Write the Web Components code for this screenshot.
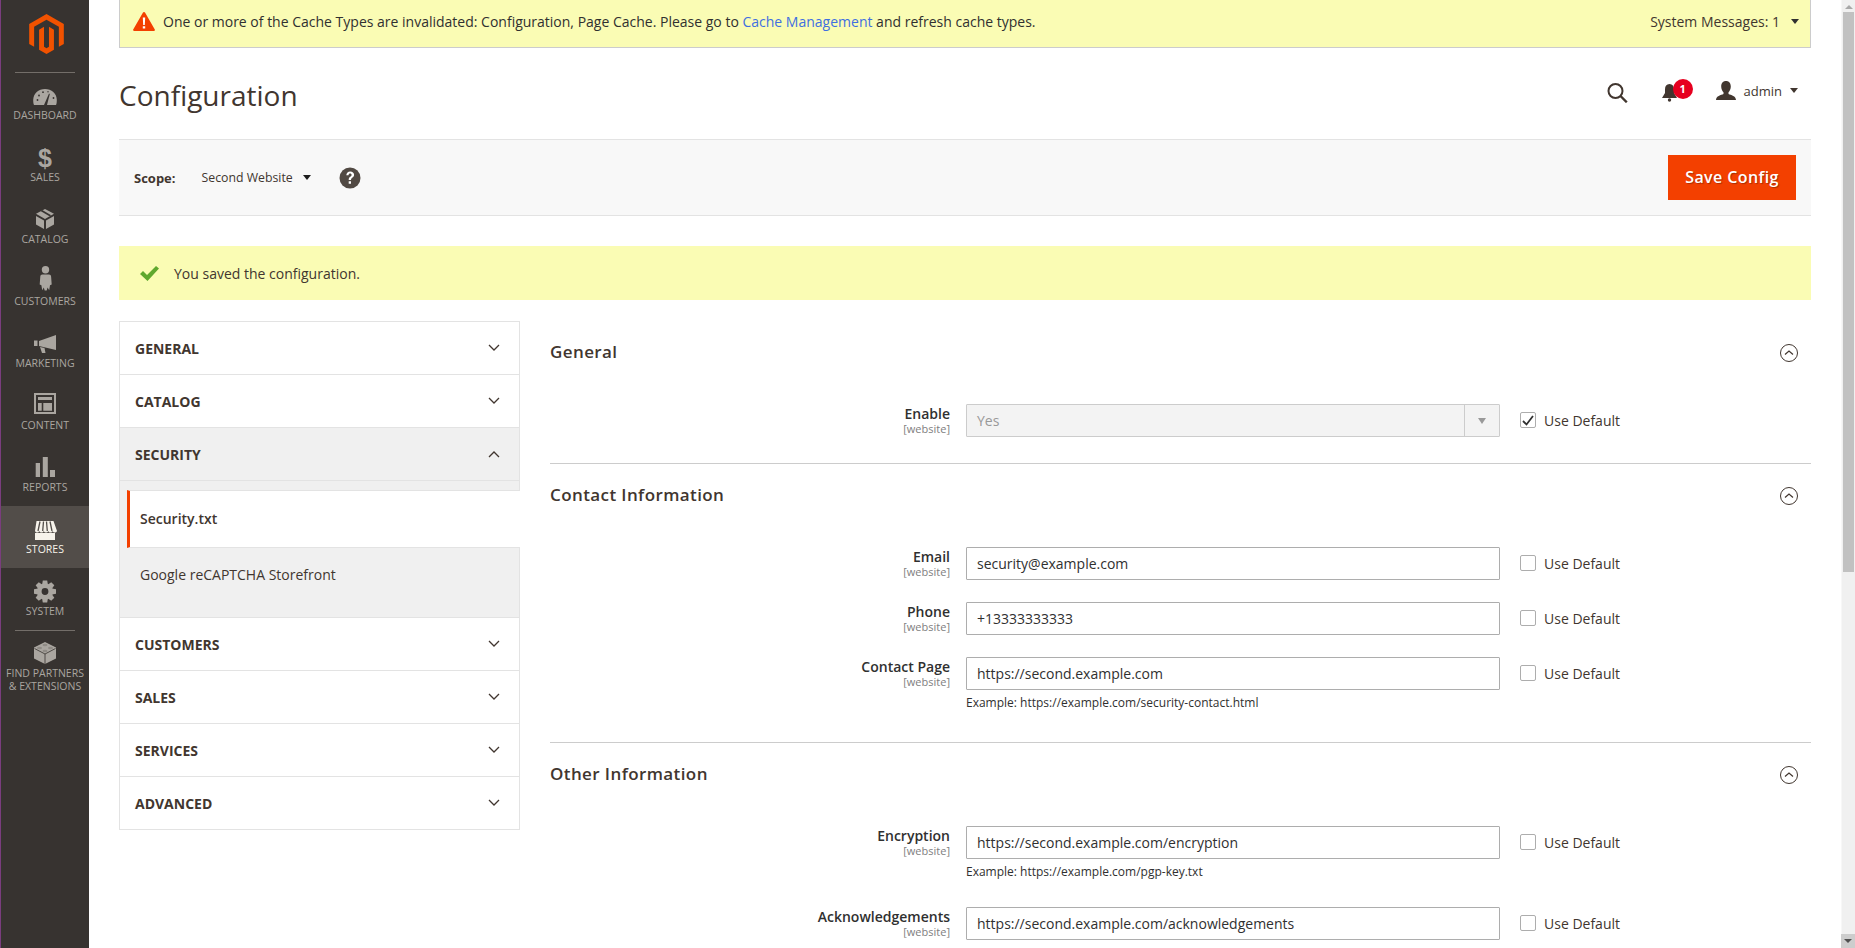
<!DOCTYPE html>
<html>
<head>
<meta charset="utf-8">
<title>Configuration</title>
<style>
html,body{margin:0;padding:0;height:948px;overflow:hidden;background:#fff}
body{display:flex;font-family:"Open Sans",sans-serif;font-size:14px;color:#303030}
main{flex:1;min-width:0;height:948px;overflow:hidden;padding:0 30px;box-sizing:border-box}
.columns{display:flex;gap:30px;margin-top:21px;align-items:flex-start}
</style>
</head>
<body>
<admin-menu>
  <menu-item label="Dashboard" icon="dashboard"></menu-item>
  <menu-item label="Sales" icon="sales"></menu-item>
  <menu-item label="Catalog" icon="catalog"></menu-item>
  <menu-item label="Customers" icon="customers"></menu-item>
  <menu-item label="Marketing" icon="marketing"></menu-item>
  <menu-item label="Content" icon="content"></menu-item>
  <menu-item label="Reports" icon="reports"></menu-item>
  <menu-item label="Stores" icon="stores" active></menu-item>
  <menu-item label="System" icon="system"></menu-item>
  <menu-item label="Find Partners &amp; Extensions" icon="partners" divided></menu-item>
</admin-menu>
<main>
  <system-notice>One or more of the Cache Types are invalidated: Configuration, Page Cache. Please go to <a>Cache Management</a> and refresh cache types.</system-notice>
  <page-head>Configuration</page-head>
  <scope-bar></scope-bar>
  <success-message>You saved the configuration.</success-message>
  <div class="columns">
    <config-tabs>
      <tab-row>General</tab-row>
      <tab-row>Catalog</tab-row>
      <tab-row open>Security</tab-row>
      <sub-tabs>
        <sub-tab current>Security.txt</sub-tab>
        <sub-tab>Google reCAPTCHA Storefront</sub-tab>
      </sub-tabs>
      <tab-row>Customers</tab-row>
      <tab-row>Sales</tab-row>
      <tab-row>Services</tab-row>
      <tab-row>Advanced</tab-row>
    </config-tabs>
    <config-form>
      <config-section heading="General">
        <config-row label="Enable" disabled checked>Yes</config-row>
      </config-section>
      <config-section heading="Contact Information">
        <config-row label="Email">security@example.com</config-row>
        <config-row label="Phone">+13333333333</config-row>
        <config-row label="Contact Page" note="Example: https://example.com/security-contact.html">https://second.example.com</config-row>
      </config-section>
      <config-section heading="Other Information">
        <config-row label="Encryption" note="Example: https://example.com/pgp-key.txt">https://second.example.com/encryption</config-row>
        <config-row label="Acknowledgements">https://second.example.com/acknowledgements</config-row>
      </config-section>
    </config-form>
  </div>
</main>
<page-scrollbar></page-scrollbar>

<script>
const shift = s => `<g transform="translate(0,-1)">${s}</g>`
const menuIcons = {
  dashboard: `<path d="M4 24c-.6-1-.8-2.700-.8-5C3.200 12.500 8.500 8 15 8s11.800 4.500 11.800 11c0 2.300-.2 4-.8 5z"/>
    <g fill="#373330"><path d="M14 24l5-11.500 .8 .4L17 24z"/><circle cx="7.500" cy="19" r=".9"/><circle cx="9" cy="14.500" r=".9"/><circle cx="13" cy="11.200" r=".9"/><circle cx="18" cy="10.800" r=".7"/><circle cx="23.500" cy="17" r=".9"/></g>`,
  sales: `<text x="15" y="24" text-anchor="middle" font-family="Liberation Sans" font-weight="700" font-size="25">$</text>`,
  catalog: `<path d="M15 4l9 4.800-9 5.200-9-5.200z"/><path d="M10.500 6l9 5.200 1.700-1-9-5.200z" fill="#373330"/><path d="M6 11l8 4.500V24l-8-4.500zM24 11l-8 4.500V24l8-4.500z"/>`,
  customers: `<circle cx="15.500" cy="2.800" r="3.700"/><path d="M12 7.500h7c1.300 0 2 .7 2.100 2l.6 8-1.700 .8-.8 5-1.600-2.800-.9 3h-2l-.9-3-1.600 2.800-.8-5-1.700-.8 .6-8c.1-1.300 .8-2 2.100-2z"/>`,
  marketing: `<path d="M9 12L26 6v15L9 17zM4 11.500h3.500V17H4zM10 18l4.500 1 1 5H12z"/>`,
  content: `<path fill-rule="evenodd" d="M4 2h22v21H4zM6 4v17h18V4z"/><path d="M8 6h14v3H8zM8 12h3.700v7.700H8zM13.300 12H22v7.700h-8.700z"/>`,
  reports: `<path d="M5.700 10H10v14H5.700zM12.800 4h5v20h-5zM20 17h5v7h-5z"/>`,
  stores: shift(`<path d="M5 19h20v7H5z"/><path d="M6.500 7h17L27 17c-1 2-3.500 2-4.300 0-.8 2-3.700 2-4.500 0-.7 2-3.600 2-4.400 0-.8 2-3.700 2-4.500 0-.8 2-3.300 2-4.300 0z"/><path d="M10 7.500L8 17M13.500 7.500L12.700 17M16.500 7.500L17.300 17M20 7.500L22 17" stroke="#524d49" stroke-width="1.300" fill="none"/>`),
  system: shift(`<circle cx="15" cy="15.500" r="5.700" fill="none" stroke="currentColor" stroke-width="4.600"/>
    <g>${[0,45,90,135,180,225,270,315].map(a => `<path transform="rotate(${a} 15 15.500)" d="M12.800 4.500h4.400l.7 4h-5.800z"/>`).join("")}</g>`),
  partners: `<path d="M15 3l11 5.500v11L15 25 4 19.500v-11z"/>
    <path d="M4.500 9.500L15 15l10.500-5.500M15 15v10" fill="none" stroke="#373330" stroke-width=".8"/>
    <g fill="#8f8b85"><ellipse cx="15" cy="6" rx="2.500" ry="1.300"/><ellipse cx="9.500" cy="9" rx="2.500" ry="1.300"/><ellipse cx="20.500" cy="9" rx="2.500" ry="1.300"/><ellipse cx="15" cy="12" rx="2.500" ry="1.300"/></g>`
}

class AdminMenu extends HTMLElement{
    constructor(){
        super()
        this.attachShadow({mode:"open"})
        this.shadowRoot.innerHTML = `
        <style>
        :host{display:block;flex:none;width:89px;height:948px;box-sizing:border-box;background:#373330;border-left:1px solid #7a3d7e}
        .logo{display:flex;justify-content:center;height:72px;box-sizing:border-box;padding-top:14px}
        .logo svg{margin-left:2px}
        hr{border:0;height:1px;background:#736e69;margin:0 14px -1px 14px;position:relative}
        </style>
        <div class="logo">
          <svg width="35" height="40" viewBox="1.609 0 20.782 24" fill="#f15200">
            <path d="M12 24l-4.455-2.572v-12l2.970-1.715v12.001l1.485.902 1.485-.902V7.713l2.971 1.715v12L12 24zM22.391 6v12l-2.969 1.714V7.713L12 3.430 4.574 7.713v12L1.609 18V6L12 0l10.391 6z"/>
          </svg>
        </div>
        <hr>
        <slot></slot>`
    }
}

class MenuItem extends HTMLElement{
    constructor(){
        super()
        this.attachShadow({mode:"open"})
    }
    connectedCallback(){
        const icon = menuIcons[this.getAttribute("icon")]
        this.shadowRoot.innerHTML = `
        <style>
        :host{display:block;height:62px;box-sizing:border-box;padding-top:9px;color:#aaa6a0;text-align:center}
        :host([active]){background:#524d49;color:#f7f3eb}
        :host([divided]){height:auto;position:relative}
        :host([divided])::before{content:"";position:absolute;top:0;left:14px;right:14px;height:1px;background:#736e69}
        svg{display:block;margin:0 auto 0;width:30px;height:28px;overflow:visible;fill:currentColor}
        .name{font-size:10.500px;line-height:13px;text-transform:uppercase;white-space:nowrap}
        </style>
        <svg viewBox="0 0 30 28">${icon}</svg>
        <div class="name">${this.getAttribute("label").replace("&","<br>&amp;")}</div>`
    }
}

class SystemNotice extends HTMLElement{
    constructor(){
        super()
        this.attachShadow({mode:"open"})
        this.shadowRoot.innerHTML = `
        <style>
        :host{display:flex;align-items:center;height:48px;box-sizing:border-box;background:#fafcb4;border:1px solid #ccc;border-top:0;padding:0 11px 4px 13px;font-size:14px;color:#303030}
        svg{flex:none;margin-right:8px}
        .text{flex:1}
        ::slotted(a){color:#3f6fe0}
        .count{color:#41362f;display:flex;align-items:center;gap:11px}
        .caret{width:0;height:0;border:4px solid transparent;border-top:5px solid #303030;border-bottom:0}
        </style>
        <svg width="22" height="19" viewBox="0 0 22 19"><path d="M11 0c.5 0 .8 .2 1 .6l9.800 17c.3 .6 0 1.400-.8 1.400H1c-.8 0-1.100-.8-.8-1.400L10 .6c.2-.4 .5-.6 1-.6z" fill="#f34000"/><path d="M9.800 5.500h2.400l-.4 7.500h-1.600zM9.800 14.200h2.400v2.400H9.800z" fill="#fff"/></svg>
        <div class="text"><slot></slot></div>
        <div class="count">System Messages: 1 <span class="caret"></span></div>`
    }
}

class PageHead extends HTMLElement{
    constructor(){
        super()
        this.attachShadow({mode:"open"})
        this.shadowRoot.innerHTML = `
        <style>
        :host{display:flex;align-items:center;height:91px;color:#41362f}
        h1{flex:1;margin:0;font-size:28px;font-weight:400;line-height:36px;padding-top:3px}
        .actions{display:flex;align-items:flex-start;align-self:flex-start;margin-top:33px;padding-right:13px}
        .search{margin-top:2px}
        .bell{position:relative;margin:3px 0 0 34px;height:18px;width:15px}
        .badge{position:absolute;left:11px;top:-5px;width:20px;height:20px;border-radius:50%;background:#e6001f;color:#fff;font-size:11px;font-weight:700;line-height:20px;text-align:center}
        .user{margin-left:39px;display:flex;align-items:center;height:19px}
        .name{margin-left:8px;font-size:13px}
        .caret{margin-left:8px;width:0;height:0;border:4px solid transparent;border-top:5px solid #41362f;border-bottom:0}
        </style>
        <h1><slot></slot></h1>
        <div class="actions">
          <svg class="search" width="21" height="20" viewBox="0 0 21 20" fill="none" stroke="#41362f"><circle cx="8.500" cy="8" r="7" stroke-width="2"/><path d="M13.500 13L19.800 19.300" stroke-width="2.400"/></svg>
          <div class="bell">
            <svg width="15" height="18" viewBox="0 0 15 18" fill="#41362f"><path d="M7.500 0c3 0 4.500 2.200 4.500 5.200v3.800l3 5H0l3-5V5.200C3 2.200 4.500 0 7.500 0z"/><circle cx="7.500" cy="16" r="1.700"/></svg>
            <div class="badge">1</div>
          </div>
          <div class="user">
            <svg width="20" height="19" viewBox="0 0 20 19" fill="#41362f"><path d="M10 0c3 0 4.800 2.200 4.800 5.500 0 2.500-1 4.500-2.300 5.800v1.700c2.500 1 7.500 2 7.500 6H0c0-4 5-5 7.500-6v-1.700C6.200 10 5.200 8 5.200 5.500 5.200 2.200 7 0 10 0z"/></svg>
            <span class="name">admin</span><span class="caret"></span>
          </div>
        </div>`
    }
}

class ScopeBar extends HTMLElement{
    constructor(){
        super()
        this.attachShadow({mode:"open"})
        this.shadowRoot.innerHTML = `
        <style>
        :host{display:flex;align-items:center;height:77px;box-sizing:border-box;background:#f8f8f8;border-top:1px solid #e3e3e3;border-bottom:1px solid #e3e3e3;padding:0 15px;font-size:13px;color:#41362f}
        b{font-weight:700;margin-right:26px}
        .site{font-size:12.300px}
        .caret{margin-left:10px;width:0;height:0;border:4px solid transparent;border-top:5px solid #1d1d1d;border-bottom:0}
        .help{margin-left:28px}
        button{margin-left:auto;width:128px;height:45px;border:0;border-radius:0;background:#f34000;color:#fff;font:600 16px "Open Sans",sans-serif;letter-spacing:.4px;text-shadow:1px 1px 1px rgba(0,0,0,.3);padding:0 0 2px}
        </style>
        <b>Scope:</b><span class="site">Second Website</span><span class="caret"></span>
        <svg class="help" width="22" height="22" viewBox="0 0 22 22"><circle cx="11" cy="11" r="10.500" fill="#514943"/><path d="M7.300 8.300C7.500 5.800 9 4.500 11.200 4.500c2.300 0 3.900 1.400 3.900 3.300 0 2.800-3.100 2.900-3.100 5.200H9.700c0-3.400 2.900-3.400 2.900-5 0-.8-.6-1.400-1.500-1.400-.9 0-1.500 .6-1.600 1.700zM9.700 14.300H12v2.400H9.700z" fill="#fff"/></svg>
        <button>Save Config</button>`
    }
}

class SuccessMessage extends HTMLElement{
    constructor(){
        super()
        this.attachShadow({mode:"open"})
        this.shadowRoot.innerHTML = `
        <style>
        :host{display:flex;align-items:center;gap:15px;height:54px;margin-top:30px;box-sizing:border-box;background:#fafcb4;padding-left:21px;font-size:14px;color:#41362f}
        </style>
        <svg width="19" height="15" viewBox="0 0 19 15"><path d="M0 8l3-3 4 4 9-9 3 2.500L7.500 15z" fill="#5fa82e"/></svg>
        <span><slot></slot></span>`
    }
}

class ConfigTabs extends HTMLElement{
    constructor(){
        super()
        this.attachShadow({mode:"open"})
        this.shadowRoot.innerHTML = `
        <style>
        :host{display:block;flex:none;width:401px;box-sizing:border-box;border:1px solid #e3e3e3;border-bottom:0}
        </style>
        <slot></slot>`
    }
}

class TabRow extends HTMLElement{
    constructor(){
        super()
        this.attachShadow({mode:"open"})
    }
    connectedCallback(){
        const points = this.hasAttribute("open") ? "1,7 6,2 11,7" : "1,1 6,6 11,1"
        this.shadowRoot.innerHTML = `
        <style>
        :host{display:flex;align-items:center;justify-content:space-between;height:53px;box-sizing:border-box;border-bottom:1px solid #e3e3e3;padding:0 19px 0 15px;font-size:14px;font-weight:700;text-transform:uppercase;color:#41362f}
        :host([open]){background:#f0f0f0;font-weight:700}
        svg{fill:none;stroke:#41362f;stroke-width:1.300}
        </style>
        <span><slot></slot></span>
        <svg width="12" height="8" viewBox="0 0 12 8"><polyline points="${points}"/></svg>`
    }
}

class SubTabs extends HTMLElement{
    constructor(){
        super()
        this.attachShadow({mode:"open"})
        this.shadowRoot.innerHTML = `
        <style>
        :host{display:block;background:#f0f0f0;padding-top:9px;border-bottom:1px solid #e3e3e3}
        </style>
        <slot></slot>`
    }
}

class SubTab extends HTMLElement{
    constructor(){
        super()
        this.attachShadow({mode:"open"})
        this.shadowRoot.innerHTML = `
        <style>
        :host{display:block;height:69px;box-sizing:border-box;padding:17px 0 0 20px;line-height:20px;font-size:14px;color:#41362f}
        :host([current]){height:58px;margin-left:7px;margin-right:-1px;padding:18px 0 0 10px;background:#fff;border-left:3px solid #f34000;border-top:1px solid #e3e3e3;border-bottom:1px solid #e3e3e3;font-weight:600}
        </style>
        <slot></slot>`
    }
}

class ConfigForm extends HTMLElement{
    constructor(){
        super()
        this.attachShadow({mode:"open"})
        this.shadowRoot.innerHTML = `
        <style>:host{display:block;flex:1;min-width:0}</style>
        <slot></slot>`
    }
}

class ConfigSection extends HTMLElement{
    constructor(){
        super()
        this.attachShadow({mode:"open"})
    }
    connectedCallback(){
        this.shadowRoot.innerHTML = `
        <style>
        :host{display:block;border-bottom:1px solid #ccc;padding-bottom:4px}
        :host(:last-child){border-bottom:0}
        header{display:flex;align-items:center;justify-content:space-between;height:60px;margin-bottom:23px;padding-right:13px}
        h2{margin:0;font-size:17px;font-weight:600;letter-spacing:.4px;color:#41362f}
        svg{margin-top:4px}
        </style>
        <header>
          <h2>${this.getAttribute("heading")}</h2>
          <svg width="18" height="18" viewBox="0 0 18 18" fill="none" stroke="#41362f"><circle cx="9" cy="9" r="8.500"/><polyline points="5,10.500 9,7 13,10.500" stroke-width="1.200"/></svg>
        </header>
        <slot></slot>`
    }
}

class ConfigRow extends HTMLElement{
    constructor(){
        super()
        this.attachShadow({mode:"open"})
    }
    connectedCallback(){
        const disabled = this.hasAttribute("disabled")
        const note = this.getAttribute("note")
        this.shadowRoot.innerHTML = `
        <style>
        :host{display:grid;grid-template-columns:400px 534px 16px auto;column-gap:16px;margin-bottom:22px;align-items:start}
        .label{text-align:right;color:#303030}
        .label b{display:block;font-size:14px;font-weight:600;line-height:20px}
        .label i{display:block;font-style:normal;font-size:11px;line-height:10px;color:#808080}
        .field{display:flex;align-items:center;height:33px;box-sizing:border-box;border:1px solid #adadad;border-radius:1px;padding-left:10px;font-size:14px;color:#303030}
        .field.off{background:#f3f3f3;border-color:#ccc;color:#999;position:relative}
        .arrow{position:absolute;right:0;top:0;bottom:0;width:34px;border-left:1px solid #ccc;display:flex;align-items:center;justify-content:center}
        .arrow::after{content:"";border:4px solid transparent;border-top:6px solid #999;border-bottom:0}
        .note{font-size:12px;line-height:26px;color:#303030}
        .box{width:16px;height:16px;box-sizing:border-box;border:1px solid #adadad;border-radius:2px;margin:8px 0 0 4px;background:#fff;display:flex;align-items:center;justify-content:center}
        .def{margin-left:-4px;line-height:33px;font-size:14px;color:#41362f;white-space:nowrap}
        </style>
        <div class="label"><b>${this.getAttribute("label")}</b><i>[website]</i></div>
        <div>
          <div class="field ${disabled ? "off" : ""}"><slot></slot>${disabled ? '<span class="arrow"></span>' : ""}</div>
          ${note ? `<div class="note">${note}</div>` : ""}
        </div>
        <div class="box">${this.hasAttribute("checked") ? '<svg width="12" height="11" viewBox="0 0 12 11"><path d="M1 6l3.500 3.500L11 1" fill="none" stroke="#303030" stroke-width="1.800"/></svg>' : ""}</div>
        <div class="def">Use Default</div>`
    }
}

class PageScrollbar extends HTMLElement{
    constructor(){
        super()
        this.attachShadow({mode:"open"})
        this.shadowRoot.innerHTML = `
        <style>
        :host{display:flex;flex-direction:column;flex:none;width:14px;height:948px;box-sizing:border-box;background:#f0f0f0;border-left:1px solid #f7f7f7;padding-top:2px}
        .up,.down{display:flex;align-items:center;justify-content:center;flex:none;height:10px}
        .up::after{content:"";border:4px solid transparent;border-bottom:4px solid #a8a8a8;border-top:0}
        .thumb{height:560px;margin:0 1px 0 1px;background:#c1c1c1;flex:none}
        .gap{flex:1}
        .down{height:14px;margin-left:-1px;background:#cdcdcd}
        .down::after{content:"";border:4px solid transparent;border-top:4px solid #505050;border-bottom:0}
        </style>
        <div class="up"></div><div class="thumb"></div><div class="gap"></div><div class="down"></div>`
    }
}

customElements.define("menu-item", MenuItem)
customElements.define("admin-menu", AdminMenu)
customElements.define("system-notice", SystemNotice)
customElements.define("page-head", PageHead)
customElements.define("scope-bar", ScopeBar)
customElements.define("success-message", SuccessMessage)
customElements.define("tab-row", TabRow)
customElements.define("sub-tabs", SubTabs)
customElements.define("sub-tab", SubTab)
customElements.define("config-tabs", ConfigTabs)
customElements.define("config-form", ConfigForm)
customElements.define("config-section", ConfigSection)
customElements.define("config-row", ConfigRow)
customElements.define("page-scrollbar", PageScrollbar)
</script>
</body>
</html>
